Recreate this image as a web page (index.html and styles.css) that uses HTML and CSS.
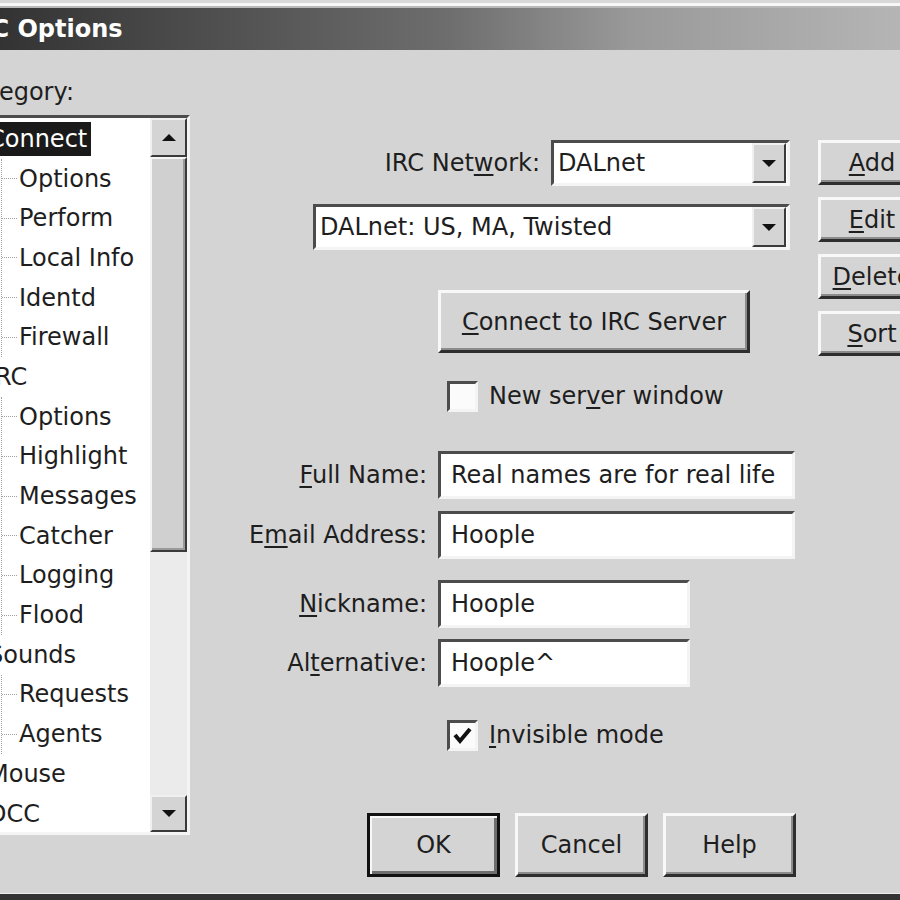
FILE: index.html
```html
<!DOCTYPE html>
<html lang="en">
<head>
    <meta charset="UTF-8">
    <title>mIRC Options</title>
    <link rel="stylesheet" href="styles.css">
</head>
<body>
    <div class="window">
        <div class="frame-top"></div>
        <div class="titlebar"><span class="title">mIRC Options</span></div>

        <div class="dialog">
            <div class="left">
                <div class="cat-label">Category:</div>
                <div class="tree">
                    <div class="items">
                        <div class="node top"><span class="label selected">Connect</span></div>
                        <div class="kids">
                            <div class="node child"><span class="branch"></span><span class="label">Options</span></div>
                            <div class="node child"><span class="branch"></span><span class="label">Perform</span></div>
                            <div class="node child"><span class="branch"></span><span class="label">Local Info</span></div>
                            <div class="node child"><span class="branch"></span><span class="label">Identd</span></div>
                            <div class="node child"><span class="branch"></span><span class="label">Firewall</span></div>
                        </div>
                        <div class="node top"><span class="label">IRC</span></div>
                        <div class="kids">
                            <div class="node child"><span class="branch"></span><span class="label">Options</span></div>
                            <div class="node child"><span class="branch"></span><span class="label">Highlight</span></div>
                            <div class="node child"><span class="branch"></span><span class="label">Messages</span></div>
                            <div class="node child"><span class="branch"></span><span class="label">Catcher</span></div>
                            <div class="node child"><span class="branch"></span><span class="label">Logging</span></div>
                            <div class="node child"><span class="branch"></span><span class="label">Flood</span></div>
                        </div>
                        <div class="node top"><span class="label">Sounds</span></div>
                        <div class="kids">
                            <div class="node child"><span class="branch"></span><span class="label">Requests</span></div>
                            <div class="node child"><span class="branch"></span><span class="label">Agents</span></div>
                        </div>
                        <div class="node top"><span class="label">Mouse</span></div>
                        <div class="node top"><span class="label">DCC</span></div>
                    </div>
                    <div class="scrollbar">
                        <div class="scroll-btn"><span class="arrow-up"></span></div>
                        <div class="thumb"></div>
                        <div class="track"></div>
                        <div class="scroll-btn down"><span class="arrow-down"></span></div>
                    </div>
                </div>
            </div>

            <div class="main">
                <div class="row-end">
                    <span class="net-label">IRC Net<u>w</u>ork:</span>
                    <div class="combo small">
                        <span class="combo-text">DALnet</span>
                        <span class="drop"><span class="arrow-down"></span></span>
                    </div>
                </div>
                <div class="row-end server-row">
                    <div class="combo wide">
                        <span class="combo-text">DALnet: US, MA, Twisted</span>
                        <span class="drop"><span class="arrow-down"></span></span>
                    </div>
                </div>

                <button class="btn connect"><u>C</u>onnect to IRC Server</button>

                <div class="check-row new-window">
                    <span class="checkbox"></span>
                    <span class="check-label">New ser<u>v</u>er window</span>
                </div>

                <div class="fields">
                    <label class="field-label" for="fullname"><u>F</u>ull Name:</label>
                    <input class="field long" id="fullname" type="text" value="Real names are for real life">
                    <label class="field-label" for="email">E<u>m</u>ail Address:</label>
                    <input class="field long" id="email" type="text" value="Hoople">
                </div>

                <div class="fields nicks">
                    <label class="field-label" for="nick"><u>N</u>ickname:</label>
                    <input class="field short" id="nick" type="text" value="Hoople">
                    <label class="field-label" for="alt">Al<u>t</u>ernative:</label>
                    <input class="field short" id="alt" type="text" value="Hoople^">
                </div>

                <div class="check-row invisible">
                    <span class="checkbox">
                        <svg width="25" height="25" viewBox="0 0 25 25"><polyline points="5,12 10,18 20,6" fill="none" stroke="#111" stroke-width="4"/></svg>
                    </span>
                    <span class="check-label"><u>I</u>nvisible mode</span>
                </div>

                <div class="bottom-buttons">
                    <button class="btn dialog-btn default">OK</button>
                    <button class="btn dialog-btn">Cancel</button>
                    <button class="btn dialog-btn">Help</button>
                </div>
            </div>

            <div class="side">
                <button class="btn side-btn"><u>A</u>dd</button>
                <button class="btn side-btn"><u>E</u>dit</button>
                <button class="btn side-btn"><u>D</u>elete</button>
                <button class="btn side-btn"><u>S</u>ort</button>
            </div>
        </div>

        <div class="frame-bottom"></div>
    </div>
</body>
</html>
```

FILE: styles.css
```css
html, body {
    margin: 0;
    padding: 0;
    width: 900px;
    height: 900px;
    overflow: hidden;
    background-color: #d4d4d4;
}
body {
    font-family: "DejaVu Sans", Verdana, sans-serif;
    font-size: 24px;
    color: #1e1e1e;
}
u {
    text-decoration-thickness: 2px;
    text-underline-offset: 3px;
}

.window {
    width: 1000px;
    height: 900px;
    margin-left: -70px;
    display: flex;
    flex-direction: column;
}
.frame-top {
    height: 8px;
    background: linear-gradient(#d8d8d8 0 3px, #f7f7f7 3px 6px, #b8b8b8 6px);
}
.titlebar {
    height: 42px;
    display: flex;
    align-items: center;
    padding-left: 9px;
    background: linear-gradient(to right, #202020 0%, #333 7%, #6e6e6e 52%, #999 70%, #b5b5b5 97%);
}
.title {
    color: #fff;
    font-weight: bold;
}
.frame-bottom {
    height: 7px;
    background: linear-gradient(#ececec 0 1px, #333 1px);
}

.dialog {
    flex: 1;
    display: flex;
}
.dialog > div {
    flex: none;
}

/* category tree */
.left {
    width: 262px;
    padding-left: 20px;
    box-sizing: border-box;
}
.cat-label {
    margin: 28px 0 9px 8px;
    line-height: 28px;
}
.tree {
    width: 240px;
    height: 720px;
    box-sizing: border-box;
    border: 3px solid;
    border-color: #4c4c4c #f4f4f4 #f4f4f4 #4c4c4c;
    background-color: #fff;
    display: flex;
}
.items {
    flex: 1;
    padding-top: 1px;
    white-space: nowrap;
}
.node {
    height: 39.7px;
    display: flex;
    align-items: center;
}
.node.top .label {
    margin-left: 31px;
    padding: 0 4px;
    line-height: 34px;
}
.label.selected {
    background-color: #1a1a1a;
    color: #fff;
    padding-right: 9px;
}
.kids {
    margin-left: 48px;
    border-left: 1px dotted #a0a0a0;
}
.branch {
    width: 15px;
    border-top: 1px dotted #a0a0a0;
}
.node.child .label {
    padding-left: 2px;
}

.scrollbar {
    width: 37px;
    display: flex;
    flex-direction: column;
}
.scroll-btn {
    height: 39px;
    box-sizing: border-box;
    border: 2px solid;
    border-color: #f0f0f0 #3a3a3a #3a3a3a #f0f0f0;
    background-color: #d4d4d4;
    display: flex;
    align-items: center;
    justify-content: center;
}
.scroll-btn.down {
    height: 37px;
}
.thumb {
    height: 395px;
    box-sizing: border-box;
    border: 2px solid;
    border-color: #f4f4f4 #3a3a3a #3a3a3a #f4f4f4;
    box-shadow: inset -2px -2px 0 #9a9a9a;
    background-color: #d0d0d0;
}
.track {
    flex: 1;
    background-color: #ebebeb;
}
.arrow-up {
    width: 0;
    height: 0;
    border-left: 7px solid transparent;
    border-right: 7px solid transparent;
    border-bottom: 7px solid #111;
}
.arrow-down {
    width: 0;
    height: 0;
    border-left: 7px solid transparent;
    border-right: 7px solid transparent;
    border-top: 7px solid #111;
}

/* server + user settings */
.main {
    width: 608px;
    padding-top: 90px;
}
.row-end {
    display: flex;
    justify-content: flex-end;
    align-items: center;
    padding-right: 10px;
}
.server-row {
    margin-top: 18px;
}
.net-label {
    margin-right: 11px;
}
.combo {
    height: 46px;
    box-sizing: border-box;
    border: 3px solid;
    border-color: #4c4c4c #f4f4f4 #f4f4f4 #4c4c4c;
    background-color: #fff;
    display: flex;
    align-items: center;
}
.combo.small {
    width: 239px;
}
.combo.wide {
    width: 477px;
}
.combo-text {
    flex: 1;
    padding-left: 4px;
}
.drop {
    width: 34px;
    height: 40px;
    margin-right: 1px;
    box-sizing: border-box;
    border: 2px solid;
    border-color: #f0f0f0 #3a3a3a #3a3a3a #f0f0f0;
    background-color: #d4d4d4;
    display: flex;
    align-items: center;
    justify-content: center;
}

.btn {
    font-family: inherit;
    font-size: 24px;
    color: #1e1e1e;
    background-color: #d4d4d4;
    box-sizing: border-box;
    border: 3px solid;
    border-color: #f8f8f8 #2e2e2e #2e2e2e #f8f8f8;
    box-shadow: inset -2px -2px 0 #8c8c8c;
    padding: 0;
    display: block;
}
.connect {
    width: 312px;
    height: 63px;
    margin: 40px 0 0 246px;
}

.check-row {
    display: flex;
    align-items: center;
    margin-left: 255px;
    height: 32px;
}
.new-window {
    margin-top: 27px;
}
.invisible {
    margin-top: 32px;
}
.checkbox {
    width: 31px;
    height: 31px;
    box-sizing: border-box;
    border: 3px solid;
    border-color: #4c4c4c #f4f4f4 #f4f4f4 #4c4c4c;
    background-color: #fbfbfb;
    display: flex;
    align-items: center;
    justify-content: center;
}
.check-label {
    margin-left: 11px;
}

.fields {
    display: grid;
    grid-template-columns: 235px auto;
    column-gap: 11px;
    row-gap: 12px;
    margin-top: 39px;
}
.fields.nicks {
    margin-top: 21px;
    row-gap: 11px;
}
.field-label {
    text-align: right;
    align-self: center;
}
.field {
    height: 48px;
    box-sizing: border-box;
    border: 3px solid;
    border-color: #4c4c4c #f4f4f4 #f4f4f4 #4c4c4c;
    padding: 0 10px;
    font-family: inherit;
    font-size: 24px;
    color: #1e1e1e;
    background-color: #fff;
    outline: none;
}
.field.long {
    width: 357px;
}
.field.short {
    width: 252px;
}

.bottom-buttons {
    display: flex;
    gap: 15px;
    margin: 62px 0 0 175px;
}
.dialog-btn {
    width: 133px;
    height: 64px;
}
.dialog-btn.default {
    border-color: #111;
    box-shadow: inset 2px 2px 0 #f8f8f8, inset -3px -3px 0 #6e6e6e;
}

.side {
    margin-left: 18px;
    padding-top: 90px;
    display: flex;
    flex-direction: column;
    gap: 12px;
}
.side-btn {
    width: 108px;
    height: 45px;
}
```
